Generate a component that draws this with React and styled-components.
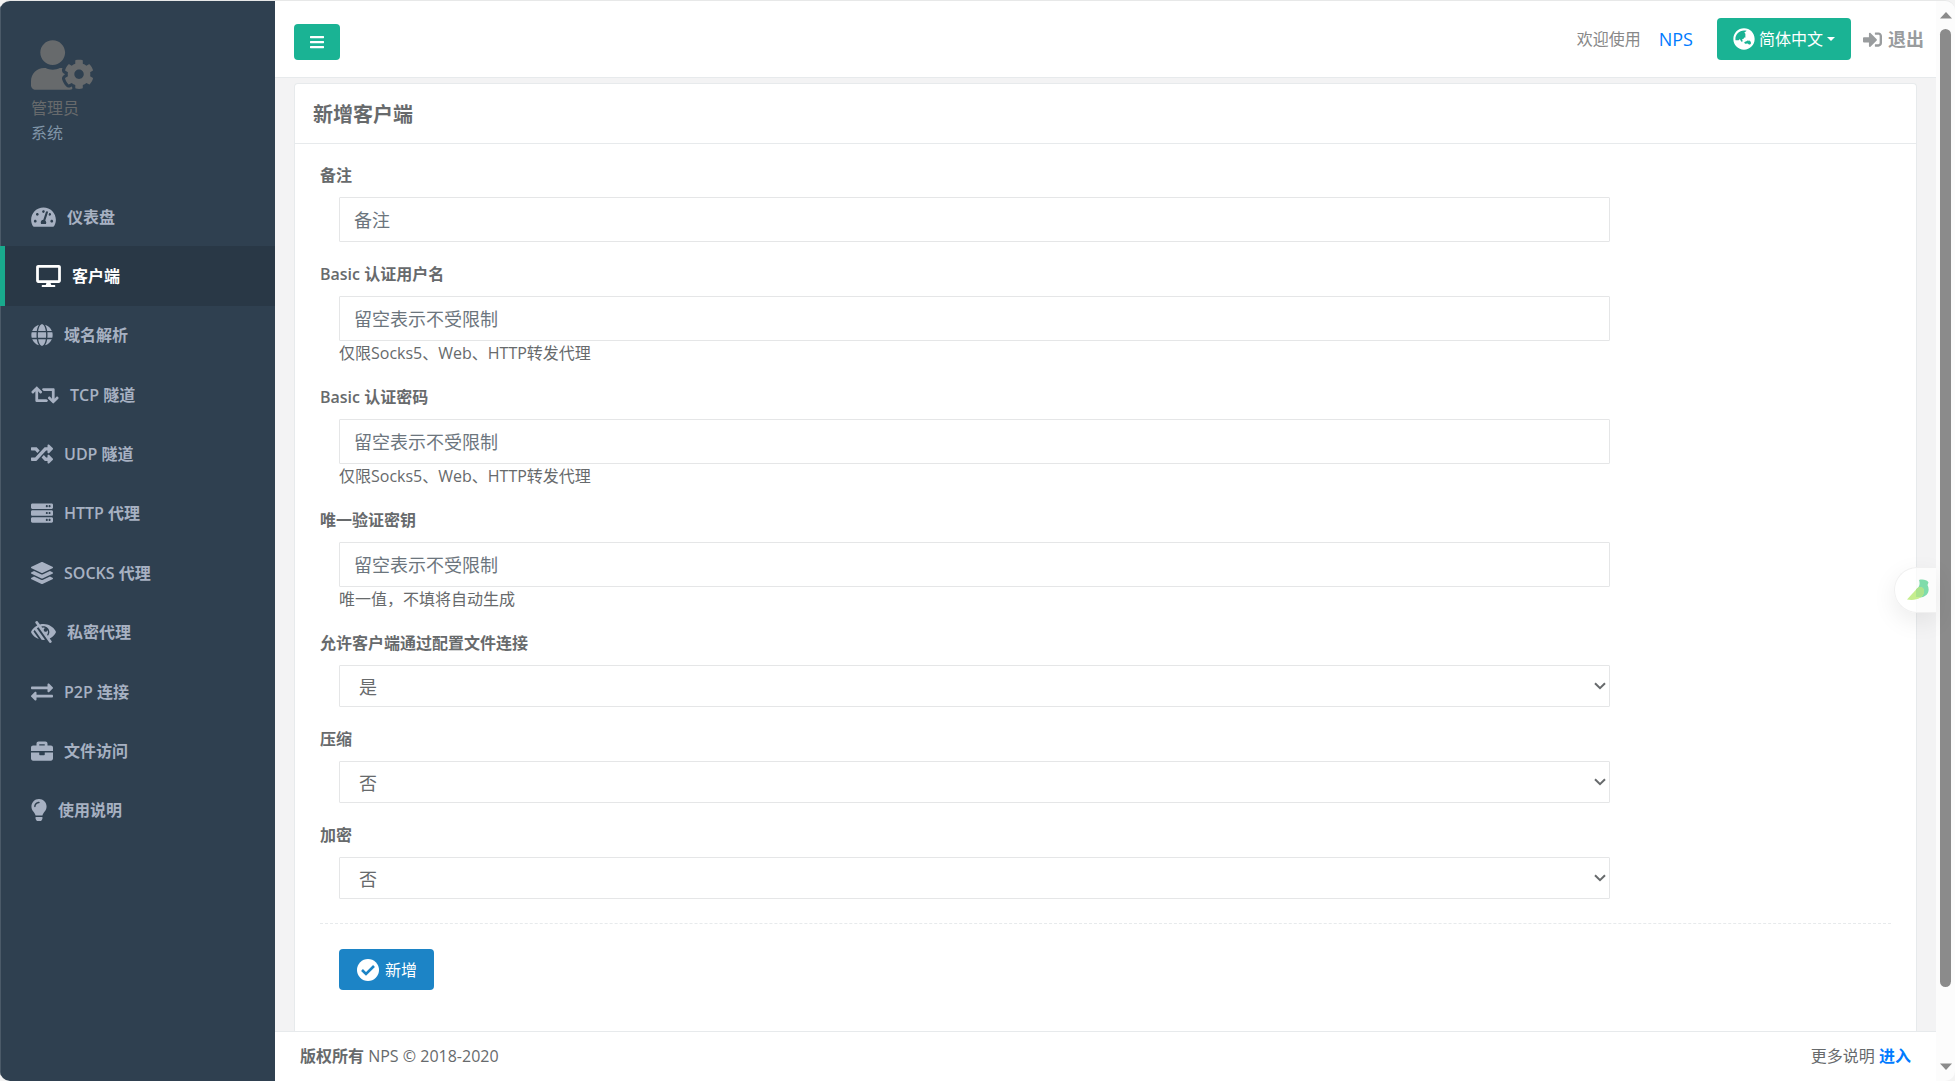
import React, { useState } from 'react';
import styled, { createGlobalStyle } from 'styled-components';
import {
  FaBars,
  FaBriefcase,
  FaDesktop,
  FaExchangeAlt,
  FaGlobe,
  FaGlobeAsia,
  FaLayerGroup,
  FaLightbulb,
  FaLowVision,
  FaRandom,
  FaRetweet,
  FaServer,
  FaSignInAlt,
  FaTachometerAlt,
  FaUserCog,
} from 'react-icons/fa';

const menu = [
  { icon: FaTachometerAlt, text: '仪表盘', width: 25 },
  { icon: FaDesktop, text: '客户端', width: 25, active: true },
  { icon: FaGlobe, text: '域名解析', width: 22 },
  { icon: FaRetweet, text: 'TCP 隧道', width: 28 },
  { icon: FaRandom, text: 'UDP 隧道', width: 22 },
  { icon: FaServer, text: 'HTTP 代理', width: 22 },
  { icon: FaLayerGroup, text: 'SOCKS 代理', width: 22 },
  { icon: FaLowVision, text: '私密代理', width: 25 },
  { icon: FaExchangeAlt, text: 'P2P 连接', width: 22 },
  { icon: FaBriefcase, text: '文件访问', width: 22 },
  { icon: FaLightbulb, text: '使用说明', width: 16 },
];

const fields = [
  { id: 'remark', label: '备注', placeholder: '备注' },
  { id: 'u', label: 'Basic 认证用户名', placeholder: '留空表示不受限制', help: '仅限Socks5、Web、HTTP转发代理' },
  { id: 'p', label: 'Basic 认证密码', placeholder: '留空表示不受限制', help: '仅限Socks5、Web、HTTP转发代理' },
  { id: 'vkey', label: '唯一验证密钥', placeholder: '留空表示不受限制', help: '唯一值，不填将自动生成' },
  { id: 'config_conn_allow', label: '允许客户端通过配置文件连接', value: '1' },
  { id: 'compress', label: '压缩', value: '0' },
  { id: 'crypt', label: '加密', value: '0' },
];

function Field({ field }) {
  const [value, setValue] = useState(field.value || '');
  const onChange = (e) => setValue(e.target.value);

  return (
    <Group>
      <Label htmlFor={field.id}>{field.label}</Label>
      <Column>
        {field.value ? (
          <SelectBox>
            <Select id={field.id} value={value} onChange={onChange}>
              <option value="0">否</option>
              <option value="1">是</option>
            </Select>
            <Chevron viewBox="0 0 12 8">
              <path d="M1 1.2l5 5 5-5" />
            </Chevron>
          </SelectBox>
        ) : (
          <Input id={field.id} type="text" placeholder={field.placeholder} value={value} onChange={onChange} />
        )}
        {field.help && <Help>{field.help}</Help>}
      </Column>
    </Group>
  );
}

function App() {
  return (
    <Page>
      <GlobalStyle />

      <Sidebar>
        <Profile>
          <FaUserCog size={62} />
          <ProfileName>管理员</ProfileName>
          <ProfileRole>系统</ProfileRole>
        </Profile>
        <Menu>
          {menu.map(({ icon: Icon, text, width, active }) => (
            <MenuItem key={text} $active={active}>
              <MenuLink href="#" $active={active}>
                <IconBox $width={width}><Icon /></IconBox>
                {text}
              </MenuLink>
            </MenuItem>
          ))}
        </Menu>
      </Sidebar>

      <Main>
        <TopBar>
          <MenuToggle type="button" aria-label="menu"><FaBars size={16} /></MenuToggle>
          <TopLinks>
            <Welcome>欢迎使用</Welcome>
            <Brand href="#">NPS</Brand>
            <Language type="button">
              <FaGlobeAsia size={22} />
              简体中文
              <Caret />
            </Language>
            <Logout href="#"><FaSignInAlt size={19} />退出</Logout>
          </TopLinks>
        </TopBar>

        <Content>
          <Card>
            <CardTitle>新增客户端</CardTitle>
            <Form onSubmit={(e) => e.preventDefault()}>
              {fields.map((field) => <Field key={field.id} field={field} />)}
              <Divider />
              <Submit type="submit">
                <svg width="22" height="22" viewBox="0 0 22 22" fill="none">
                  <circle cx="11" cy="11" r="11" fill="#fff" />
                  <path d="M5 11l4 4 8-8" stroke="#1c84c6" strokeWidth="2.600" />
                </svg>
                新增
              </Submit>
            </Form>
          </Card>
        </Content>

        <Footer>
          <span><strong>版权所有</strong> NPS © 2018-2020</span>
          <span>更多说明 <FooterLink href="#">进入</FooterLink></span>
        </Footer>

        <Bubble type="button" aria-label="bird">
          <svg width="23" height="22" viewBox="0 0 23 22">
            <path d="M12 1c3-1 8-.5 9.500 2.500L20.500 6c3 6 0 12-7.500 12.500L10 10c2-2 3.500-5 2-9z" fill="#7fdcab" />
            <path d="M0 20.500L10.500 9c2.500-2.500 7-.5 6.500 4-.7 6-8 9-17 7.500z" fill="#c6ee8e" />
            <path d="M9 10.600L10.500 9c2.500-2.500 7-.5 6.500 4-.3 2-1.300 3.700-3 5H9z" fill="#abe38c" />
          </svg>
        </Bubble>
      </Main>

      <ScrollTrack>
        <svg width="12" height="7" viewBox="0 0 12 7"><path d="M0 6.500L6 0l6 6.500z" fill="#8b8b8b" /></svg>
        <ScrollThumb />
        <svg width="12" height="7" viewBox="0 0 12 7"><path d="M0 .5L6 7l6-6.500z" fill="#8b8b8b" /></svg>
      </ScrollTrack>
    </Page>
  );
}

export default App;

const GlobalStyle = createGlobalStyle`
  * {
    box-sizing: border-box;
  }

  body {
    margin: 0;
    background: #f3f3f3;
    color: #676a6c;
    font-family: "Open Sans", "Noto Sans CJK SC", sans-serif;
    font-size: 16px;
    line-height: 24px;
  }

  a {
    text-decoration: none;
  }

  button, input, select {
    font: inherit;
  }

  strong {
    font-weight: 600;
  }
`
const Page = styled.div`
  display: flex;
  min-height: 100vh;
  border-top: 1px solid #e7e8e8;
  border-radius: 10px;
  overflow: hidden;
  background: #f3f3f4;
`
const Sidebar = styled.aside`
  flex: 0 0 275px;
  background: #2f4050;
  border-left: 1px solid #4b5a68;
`
const Profile = styled.div`
  display: flex;
  flex-direction: column;
  padding: 33px 30px 0;
  height: 186px;
  color: #676a6c;
`
const ProfileName = styled.span`
  line-height: 25px;
`
const ProfileRole = styled.span`
  line-height: 25px;
  color: #8095a8;
`
const Menu = styled.ul`
  display: flex;
  flex-direction: column;
  height: 653px;
  margin: 0 0 0 -1px;
  padding: 0;
  list-style: none;
`
const MenuItem = styled.li`
  flex: 1;
  display: flex;
  background: ${(p) => (p.$active ? '#293846' : 'none')};
  border-left: ${(p) => (p.$active ? '5px solid #19aa8d' : 'none')};
`
const MenuLink = styled.a`
  flex: 1;
  display: flex;
  align-items: center;
  gap: 11px;
  padding: 0 31px;
  font-weight: 600;
  color: ${(p) => (p.$active ? '#fff' : '#a7b1c2')};
`
const IconBox = styled.span`
  display: flex;

  svg {
    width: ${(p) => p.$width}px;
    height: 22px;
  }
`
const Main = styled.main`
  position: relative;
  flex: 1;
  display: flex;
  flex-direction: column;
  min-width: 0;
`
const TopBar = styled.header`
  display: flex;
  justify-content: space-between;
  align-items: flex-start;
  height: 77px;
  padding: 17px 12px 0 19px;
  background: #fff;
  border-bottom: 1px solid #e7eaec;
`
const MenuToggle = styled.button`
  display: flex;
  align-items: center;
  justify-content: center;
  width: 46px;
  height: 36px;
  margin-top: 6px;
  padding: 0;
  border: 0;
  border-radius: 4px;
  background: #1ab394;
  color: #fff;
`
const TopLinks = styled.div`
  display: flex;
  align-items: center;
`
const Welcome = styled.span`
  color: #888;
`
const Brand = styled.a`
  margin: 0 24px 0 18px;
  font-size: 18px;
  color: #007bff;
`
const Language = styled.button`
  display: flex;
  align-items: center;
  gap: 4px;
  height: 42px;
  padding: 0 16px;
  border: 0;
  border-radius: 4px;
  background: #1ab394;
  color: #fff;
`
const Caret = styled.i`
  border: 4px solid transparent;
  border-top-color: #fff;
  border-bottom: 0;
`
const Logout = styled.a`
  display: flex;
  align-items: center;
  gap: 6px;
  margin-left: 12px;
  font-size: 18px;
  font-weight: 700;
  color: #999c9e;
`
const Content = styled.div`
  flex: 1;
  display: flex;
  padding: 5px 19px 0;
`
const Card = styled.section`
  flex: 1;
  background: #fff;
  border: 1px solid #e7eaec;
  border-bottom: 0;
  border-radius: 4px 4px 0 0;
`
const CardTitle = styled.h5`
  margin: 0;
  padding: 19px 18px 16px;
  border-bottom: 1px solid #e7eaec;
  font-size: 20px;
  font-weight: 600;
  line-height: 24px;
`
const Form = styled.form`
  padding: 19px 25px 40px;
`
const Group = styled.div`
  margin-bottom: 20px;
`
const Label = styled.label`
  display: block;
  margin-bottom: 10px;
  font-weight: 600;
`
const Column = styled.div`
  width: 83.3333%;
  padding: 0 19px;
`
const Input = styled.input`
  display: block;
  width: 100%;
  height: 45px;
  padding: 0 14px;
  border: 1px solid #e5e6e7;
  border-radius: 1px;
  background: #fff;
  color: #676a6c;
  font-size: 18px;

  &::placeholder {
    color: #6c757d;
  }
`
const SelectBox = styled.div`
  position: relative;
`
const Select = styled.select`
  display: block;
  width: 100%;
  height: 42px;
  padding: 2px 19px 0;
  appearance: none;
  border: 1px solid #e5e6e7;
  border-radius: 1px;
  background: #fff;
  color: #676a6c;
  font-size: 18px;
`
const Chevron = styled.svg`
  position: absolute;
  right: 4px;
  top: 17px;
  width: 12px;
  height: 8px;
  fill: none;
  stroke: #676a6c;
  stroke-width: 2;
  pointer-events: none;
`
const Help = styled.span`
  display: block;
`
const Divider = styled.hr`
  margin: 24px 0 25px;
  border: 0;
  border-top: 1px dashed #e7eaec;
`
const Submit = styled.button`
  display: flex;
  align-items: center;
  gap: 6px;
  height: 41px;
  margin-left: 19px;
  padding: 0 17px 0 18px;
  border: 0;
  border-radius: 4px;
  background: #1c84c6;
  color: #fff;
`
const Footer = styled.footer`
  display: flex;
  justify-content: space-between;
  height: 50px;
  padding: 12px 25px;
  background: #fff;
  border-top: 1px solid #e7eaec;
`
const FooterLink = styled.a`
  font-weight: 600;
  color: #007bff;
`
const Bubble = styled.button`
  position: absolute;
  right: 0;
  top: 566px;
  display: flex;
  align-items: center;
  width: 42px;
  height: 46px;
  padding: 0 0 0 12px;
  border: 1px solid #f0f0f0;
  border-right: 0;
  border-radius: 23px 0 0 23px;
  background: rgba(255, 255, 255, 0.7);
  box-shadow: 0 8px 24px rgba(0, 0, 0, 0.08);
`
const ScrollTrack = styled.div`
  flex: 0 0 19px;
  display: flex;
  flex-direction: column;
  align-items: center;
  gap: 10px;
  padding: 11px 0;
  background: #fcfcfc;
`
const ScrollThumb = styled.div`
  flex: 1;
  width: 11px;
  margin-bottom: 66px;
  border-radius: 6px;
  background: #8b8b8b;
`
